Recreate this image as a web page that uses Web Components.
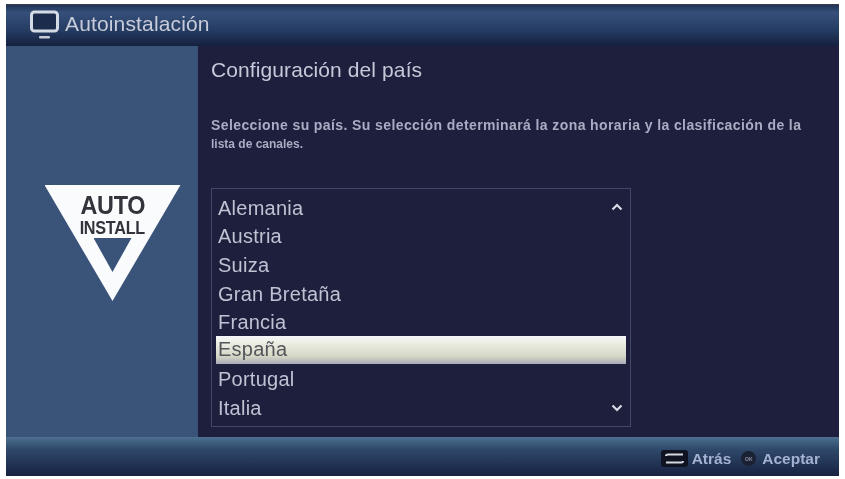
<!DOCTYPE html>
<html lang="es">
<head>
<meta charset="utf-8">
<title>Autoinstalación</title>
<style>
  html, body { margin: 0; height: 100%; background: #fff; }
  body { font-family: "Liberation Sans", Arial, sans-serif; overflow: hidden; }
</style>
</head>
<body>
<osd-screen>
  <osd-header slot="header">Autoinstalación</osd-header>
  <osd-side slot="side"></osd-side>
  <osd-main slot="main" heading="Configuración del país">
    <span slot="intro">Seleccione su país. Su selección determinará la zona horaria y la clasificación de la</span>
    <span slot="intro-end">lista de canales.</span>
    <country-list>
      <country-item>Alemania</country-item>
      <country-item>Austria</country-item>
      <country-item>Suiza</country-item>
      <country-item>Gran Bretaña</country-item>
      <country-item>Francia</country-item>
      <country-item selected>España</country-item>
      <country-item>Portugal</country-item>
      <country-item>Italia</country-item>
    </country-list>
  </osd-main>
  <osd-footer slot="footer"></osd-footer>
</osd-screen>

<script>
class OsdScreen extends HTMLElement {
  constructor() {
    super();
    this.attachShadow({ mode: "open" }).innerHTML = `
      <style>
        :host {
          display: grid;
          grid-template-columns: 192px 1fr;
          grid-template-rows: 41px 1fr 39px;
          width: 833px;
          height: 472px;
          margin: 4px 0 0 6px;
          background: #1d1f3c;
          border-top: 1px solid #3a3d48;
          box-sizing: border-box;
          filter: blur(.5px);
        }
        ::slotted([slot=header]), ::slotted([slot=footer]) { grid-column: 1 / -1; }
      </style>
      <slot name="header"></slot>
      <slot name="side"></slot>
      <slot name="main"></slot>
      <slot name="footer"></slot>`;
  }
}

class OsdHeader extends HTMLElement {
  constructor() {
    super();
    this.attachShadow({ mode: "open" }).innerHTML = `
      <style>
        :host {
          display: flex;
          align-items: center;
          gap: 4px;
          padding: 0 0 3px 22px;
          color: #c8ccda;
          font-size: 21px;
          letter-spacing: .15px;
          background: linear-gradient(#1f3355 0, #35507a 18%, #253c62 62%, #15203f 100%);
        }
        svg { width: 33px; height: 33px; flex: none; }
      </style>
      <svg viewBox="0 0 33 33" fill="none">
        <rect x="3.500" y="4" width="26" height="19" rx="3" stroke="#d5dbe4" stroke-width="3" fill="#1c2c4d"/>
        <rect x="11" y="28" width="11" height="2.500" rx="1" fill="#c5ccd8"/>
      </svg>
      <slot></slot>`;
  }
}

class OsdSide extends HTMLElement {
  constructor() {
    super();
    this.attachShadow({ mode: "open" }).innerHTML = `
      <style>
        :host {
          display: flex;
          flex-direction: column;
          align-items: center;
          padding: 139px 0 0 21px;
          background: #3a5379;
          box-sizing: border-box;
        }
        .logo {
          display: flex;
          flex-direction: column;
          align-items: center;
          width: 136px;
          height: 116px;
          background: #fafbfd;
          clip-path: polygon(0 0, 100% 0, 50% 100%);
          color: #33343b;
          font-weight: bold;
        }
        .auto { font-size: 26px; line-height: 24px; margin-top: 8px; transform: scaleX(.9); letter-spacing: -.4px; }
        .install { font-size: 18px; line-height: 18px; margin-top: 2px; transform: scaleX(.9); letter-spacing: -.3px; }
        .notch {
          width: 38px;
          height: 34px;
          margin-top: 1px;
          background: #3a5379;
          clip-path: polygon(0 0, 100% 0, 50% 100%);
        }
      </style>
      <div class="logo">
        <span class="auto">AUTO</span>
        <span class="install">INSTALL</span>
        <div class="notch"></div>
      </div>`;
  }
}

class OsdMain extends HTMLElement {
  constructor() {
    super();
    this.attachShadow({ mode: "open" }).innerHTML = `
      <style>
        :host {
          display: flex;
          flex-direction: column;
          padding: 12px 12px 0 13px;
          color: #bfc2d3;
          min-width: 0;
        }
        h1 {
          margin: 0 0 34px;
          font-size: 21px;
          line-height: 24px;
          font-weight: normal;
          letter-spacing: .1px;
          color: #c6c9da;
        }
        p {
          margin: 0 0 34px;
          font-weight: bold;
          color: #a9acc2;
          line-height: 19px;
          white-space: nowrap;
        }
        .first { display: block; font-size: 14px; letter-spacing: .4px; }
        .end { display: block; font-size: 12px; }
      </style>
      <h1></h1>
      <p>
        <span class="first"><slot name="intro"></slot></span>
        <span class="end"><slot name="intro-end"></slot></span>
      </p>
      <slot></slot>`;
    this.shadowRoot.querySelector("h1").textContent = this.getAttribute("heading");
  }
}

class CountryList extends HTMLElement {
  constructor() {
    super();
    this.attachShadow({ mode: "open" }).innerHTML = `
      <style>
        :host {
          display: block;
          position: relative;
          width: 420px;
          height: 239px;
          padding: 5px 4px;
          box-sizing: border-box;
          border: 1.5px solid #44476a;
        }
        .rows { display: grid; grid-auto-rows: 28.6px; }
        svg { position: absolute; right: 7px; width: 12px; height: 8px; }
        .up { top: 14px; }
        .down { bottom: 14px; }
      </style>
      <div class="rows"><slot></slot></div>
      <svg class="up" viewBox="0 0 12 8" fill="none" stroke="#d8dae6" stroke-width="2.200"><path d="M1.500 6.500 6 2l4.500 4.500"/></svg>
      <svg class="down" viewBox="0 0 12 8" fill="none" stroke="#d8dae6" stroke-width="2.200"><path d="M1.500 1.500 6 6l4.500-4.500"/></svg>`;
  }
}

class CountryItem extends HTMLElement {
  constructor() {
    super();
    this.attachShadow({ mode: "open" }).innerHTML = `
      <style>
        :host {
          display: flex;
          align-items: center;
          padding-left: 2px;
          font-size: 20px;
          letter-spacing: .25px;
          color: #bfc2d3;
        }
        :host([selected]) {
          color: #54565c;
          margin: -1px 0 2px;
          background: linear-gradient(#f4f6fa 0, #eef0e6 20%, #d5d8c6 72%, #a9abb8 100%);
        }
      </style>
      <slot></slot>`;
  }
}

class OsdFooter extends HTMLElement {
  constructor() {
    super();
    this.attachShadow({ mode: "open" }).innerHTML = `
      <style>
        :host {
          display: flex;
          align-items: center;
          justify-content: flex-end;
          padding: 4px 19px 0 0;
          font-size: 15.500px;
          font-weight: bold;
          color: #a3b2d0;
          background: linear-gradient(#4d7090 0, #2f4a6c 30%, #1c2a4a 85%, #18233f 100%);
          box-sizing: border-box;
        }
        .back {
          display: grid;
          place-items: center;
          width: 27px;
          height: 17px;
          margin-right: 4px;
          border-radius: 3px;
          background: #0f1322;
        }
        .ok {
          display: grid;
          place-items: center;
          width: 15px;
          height: 15px;
          margin: 0 6px 0 10px;
          border-radius: 50%;
          background: #1a2133;
          color: #8d93a5;
          font-size: 5px;
        }
      </style>
      <span class="back">
        <svg width="23" height="13" viewBox="0 0 23 13" fill="none" stroke="#d6d9df" stroke-width="2"><path d="M3 4q0-1.500 2-1.500h15M20 9q0 1.500-2 1.500H3"/></svg>
      </span>
      <span>Atrás</span>
      <span class="ok">OK</span>
      <span>Aceptar</span>`;
  }
}

customElements.define("osd-screen", OsdScreen);
customElements.define("osd-header", OsdHeader);
customElements.define("osd-side", OsdSide);
customElements.define("osd-main", OsdMain);
customElements.define("country-list", CountryList);
customElements.define("country-item", CountryItem);
customElements.define("osd-footer", OsdFooter);
</script>
</body>
</html>
